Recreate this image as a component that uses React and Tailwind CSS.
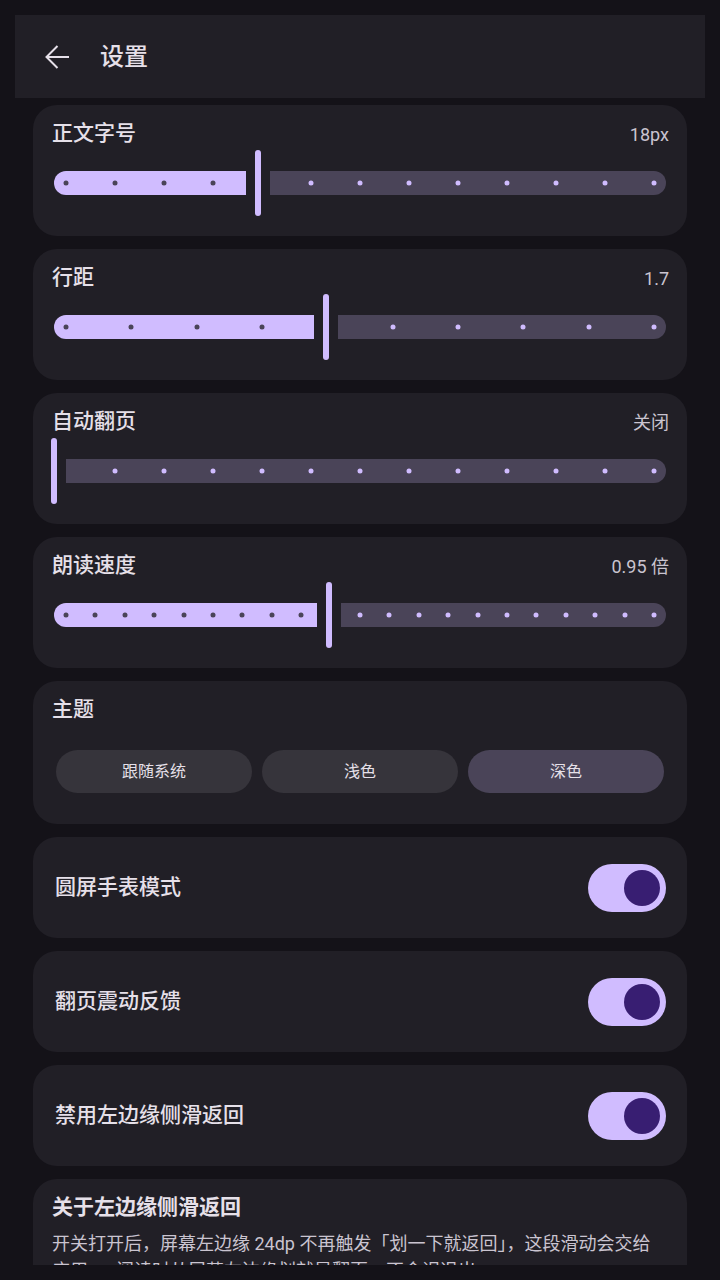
import React from "react";

const FONT = { fontFamily: 'Roboto, "Noto Sans CJK SC", sans-serif' };

const sliders = [
  { title: "正文字号", value: "18px", steps: 13, index: 4 },
  { title: "行距", value: "1.7", steps: 10, index: 4 },
  { title: "自动翻页", value: "关闭", steps: 13, index: 0 },
  { title: "朗读速度", value: "0.95 倍", steps: 21, index: 9 },
];

const toggles = ["圆屏手表模式", "翻页震动反馈", "禁用左边缘侧滑返回"];

// track geometry: 612px wide, dots inset 12px, 12px clearance round the thumb
const TRACK = 612;

const Dots = ({ dots, start, end, color }) => (
  <>
    {dots
      .filter((d) => d - start >= 10 && end - d >= 10)
      .map((d) => (
        <span
          key={d}
          className={`absolute top-1/2 h-[5px] w-[5px] -translate-x-1/2 -translate-y-1/2 rounded-full ${color}`}
          style={{ left: d - start }}
        />
      ))}
  </>
);

const Slider = ({ steps, index }) => {
  const f = index / (steps - 1);
  const center = f * TRACK;
  const activeWidth = center - 12;
  const dots = Array.from({ length: steps }, (_, i) => 12 + (i * 588) / (steps - 1));

  return (
    <div className="flex h-[66px] w-[618px] items-center">
      {activeWidth > 0 && (
        <div
          className="relative ml-[3px] h-[24px] rounded-l-full rounded-r-[3px] bg-[#d0bcff]"
          style={{ width: activeWidth }}
        >
          <Dots dots={dots} start={0} end={activeWidth} color="bg-[#4a4458]" />
        </div>
      )}
      <div className={`h-[66px] w-[6px] rounded-full bg-[#d0bcff] ${activeWidth > 0 ? "ml-[9px]" : ""}`} />
      <div className="relative ml-[9px] mr-[3px] h-[24px] flex-1 rounded-l-[3px] rounded-r-full bg-[#4a4458]">
        <Dots dots={dots} start={center + 12} end={TRACK} color="bg-[#d0bcff]" />
      </div>
    </div>
  );
};

const Card = ({ children, className = "" }) => (
  <div className={`rounded-[24px] bg-[#211f26] ${className}`}>{children}</div>
);

export default function App() {
  return (
    <div className="min-h-[1280px] bg-[#141218] p-[15px]" style={FONT}>
      <div className="flex h-[1250px] flex-col overflow-hidden">
        {/* Top bar */}
        <div className="flex h-[83px] shrink-0 items-center bg-[#211f26] pl-[30px]">
          <svg width="25" height="24" viewBox="0 0 25 24" fill="none" stroke="#e6e0e9" strokeWidth="2">
            <path d="M24 12H1.5M12.5 1L1.5 12l11 11" />
          </svg>
          <span className="ml-[30px] text-[24px] font-medium text-[#e6e0e9]">设置</span>
        </div>

        <div className="mt-[7px] flex flex-col gap-[13px] px-[18px]">
          {sliders.map((s) => (
            <Card key={s.title} className="px-[18px] pb-[20px] pt-[15px]">
              <div className="flex h-[28px] items-center justify-between pl-[1px]">
                <span className="text-[21px] font-medium text-[#e6e0e9]">{s.title}</span>
                <span className="text-[18px] text-[#cac4d0]">{s.value}</span>
              </div>
              <div className="mt-[2px]">
                <Slider steps={s.steps} index={s.index} />
              </div>
            </Card>
          ))}

          {/* Theme */}
          <Card className="px-[19px] pb-[31px] pt-[15px]">
            <div className="flex h-[28px] items-center text-[21px] font-medium text-[#e6e0e9]">主题</div>
            <div className="mt-[26px] grid grid-cols-3 gap-[10px] px-[4px]">
              {["跟随系统", "浅色", "深色"].map((t) => (
                <div
                  key={t}
                  className={`flex h-[43px] items-center justify-center rounded-full text-[16px] text-[#e6e0e9] ${
                    t === "深色" ? "bg-[#4a4458]" : "bg-[#36343b]"
                  }`}
                >
                  {t}
                </div>
              ))}
            </div>
          </Card>

          {toggles.map((t) => (
            <Card key={t} className="flex h-[101px] items-center justify-between pl-[22px] pr-[21px]">
              <span className="text-[21px] font-medium text-[#e6e0e9]">{t}</span>
              <div className="flex h-[48px] w-[78px] items-center justify-end rounded-full bg-[#d0bcff] pr-[6px]">
                <div className="h-[36px] w-[36px] rounded-full bg-[#381e72]" />
              </div>
            </Card>
          ))}

          {/* About */}
          <Card className="px-[19px] pb-[20px] pt-[15px]">
            <div className="flex h-[28px] items-center text-[21px] font-semibold text-[#e6e0e9]">
              关于左边缘侧滑返回
            </div>
            <p className="mt-[8px] text-[18px] leading-[27px] text-[#cac4d0]">
              开关打开后，屏幕左边缘 24dp 不再触发「划一下就返回」，这段滑动会交给应用——阅读时从屏幕左边缘划就是翻页，不会误退出。
            </p>
          </Card>
        </div>
      </div>
    </div>
  );
}
